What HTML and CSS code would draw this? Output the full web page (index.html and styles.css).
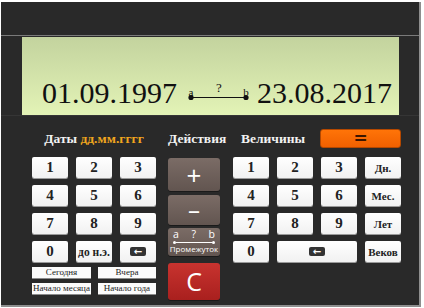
FILE: index.html
```html
<!DOCTYPE html>
<html lang="ru">
<head>
<meta charset="utf-8">
<title>Калькулятор дат</title>
<link rel="stylesheet" href="styles.css">
</head>
<body>
<div class="panel">
  <div class="topbar"></div>
  <div class="display">
    <div class="lcd">
      <span class="date">01.09.1997</span>
      <svg class="link" width="76" height="30" viewBox="0 0 76 30">
        <text x="11" y="18" text-anchor="middle" class="ltr">a</text>
        <text x="39" y="14" text-anchor="middle" class="ltr q">?</text>
        <text x="66" y="18" text-anchor="middle" class="ltr">b</text>
        <line x1="11" y1="19.5" x2="66" y2="19.5" stroke="#111" stroke-width="1.2"/>
        <circle cx="11" cy="19.5" r="2.6" fill="#111"/>
        <circle cx="66" cy="19.5" r="2.6" fill="#111"/>
      </svg>
      <span class="date d2">23.08.2017</span>
    </div>
  </div>
  <div class="controls">
    <div class="col-left">
      <div class="head">Даты <span class="fmt">дд.мм.гггг</span></div>
      <div class="keys3">
        <div class="key">1</div><div class="key">2</div><div class="key">3</div>
        <div class="key">4</div><div class="key">5</div><div class="key">6</div>
        <div class="key">7</div><div class="key">8</div><div class="key">9</div>
        <div class="key">0</div><div class="key small">до н.э.</div><div class="key"><span class="bs">&#8592;</span></div>
      </div>
      <div class="quick">
        <div class="qkey">Сегодня</div><div class="qkey">Вчера</div>
        <div class="qkey">Начало месяца</div><div class="qkey">Начало года</div>
      </div>
    </div>
    <div class="col-mid">
      <div class="head">Действия</div>
      <div class="ops">
        <div class="op plus">+</div>
        <div class="op minus">&#8211;</div>
        <div class="op span">
          <div class="abq"><span>a</span><span>?</span><span>b</span></div>
          <div class="seg"><i></i><b></b><i></i></div>
          <div class="plabel">Промежуток</div>
        </div>
        <div class="op clear">C</div>
      </div>
    </div>
    <div class="col-right">
      <div class="headrow">
        <div class="head hv">Величины</div>
        <div class="eq">=</div>
      </div>
      <div class="keys4">
        <div class="key">1</div><div class="key">2</div><div class="key">3</div><div class="key unit">Дн.</div>
        <div class="key">4</div><div class="key">5</div><div class="key">6</div><div class="key unit">Мес.</div>
        <div class="key">7</div><div class="key">8</div><div class="key">9</div><div class="key unit">Лет</div>
        <div class="key">0</div><div class="key wide"><span class="bs">&#8592;</span></div><div class="key unit">Веков</div>
      </div>
    </div>
  </div>
</div>
</body>
</html>
```

FILE: styles.css
```css
html, body {
  margin: 0;
  padding: 0;
  background: #ffffff;
}

.panel {
  margin: 2px 0 0 1px;
  width: 418px;
  height: 303px;
  background: #292929;
  border-right: 2px solid #8e8e8e;
  border-bottom: 2px solid #8e8e8e;
  display: flex;
  flex-direction: column;
  font-family: "Liberation Serif", "Times New Roman", "DejaVu Serif", serif;
}

.topbar {
  height: 33px;
  border-bottom: 1px solid #7a7a7a;
}

.display {
  height: 80px;
  padding: 1px 20px 0 21px;
  box-sizing: border-box;
  border-bottom: 1px solid #353535;
}

.lcd {
  height: 78px;
  background: linear-gradient(#c3d39e, #e3f3b6);
  display: flex;
  align-items: flex-end;
  padding: 0 0 7px 20px;
  box-sizing: border-box;
}

.date {
  font-family: "Liberation Serif", "Times New Roman", "DejaVu Serif", serif;
  font-size: 30px;
  line-height: 30px;
  color: #111;
}

.link {
  display: block;
  margin-left: 3px;
}

.ltr {
  font-family: "Liberation Serif", serif;
  font-size: 11px;
  fill: #111;
}

.q {
  font-size: 13px;
}

.d2 {
  margin-left: 1px;
}

.controls {
  display: flex;
  padding: 13px 0 0 31px;
}

.head {
  height: 19px;
  line-height: 19px;
  color: #f2f2f2;
  font-weight: bold;
  font-size: 13.5px;
  text-align: center;
  white-space: nowrap;
}

.fmt {
  color: #f0a51e;
}

.col-left {
  width: 124px;
}

.keys3 {
  margin-top: 9px;
  display: grid;
  grid-template-columns: repeat(3, 36px);
  grid-auto-rows: 21px;
  column-gap: 8px;
  row-gap: 7px;
}

.keys4 {
  margin-top: 9px;
  display: grid;
  grid-template-columns: repeat(4, 36px);
  grid-auto-rows: 21px;
  column-gap: 8px;
  row-gap: 7px;
}

.key {
  background: linear-gradient(#ffffff, #f1f1f1);
  border-radius: 2px;
  box-shadow: 0 1px 0 #9a9a9a;
  color: #222;
  font-weight: bold;
  font-size: 15px;
  display: flex;
  align-items: center;
  justify-content: center;
  white-space: nowrap;
}

.key.small {
  font-size: 11.5px;
}

.key.unit {
  font-size: 11px;
}

.key.wide {
  grid-column: span 2;
}

.bs {
  display: inline-block;
  width: 16px;
  height: 9px;
  line-height: 9px;
  background: #333;
  color: #fff;
  border-radius: 2px;
  font-family: "DejaVu Sans", sans-serif;
  font-size: 10px;
  font-weight: bold;
  text-align: center;
}

.quick {
  margin-top: 5px;
  display: grid;
  grid-template-columns: 59px 58px;
  grid-auto-rows: 11px;
  column-gap: 7px;
  row-gap: 5px;
}

.qkey {
  background: #fbfbfb;
  color: #222;
  font-size: 9px;
  line-height: 11px;
  text-align: center;
  white-space: nowrap;
  box-shadow: 0 1px 0 #8a8a8a;
}

.col-mid {
  width: 52px;
  margin-left: 12px;
}

.ops {
  margin-top: 10px;
  display: flex;
  flex-direction: column;
}

.op {
  border-radius: 3px;
  background: linear-gradient(#7b6c66, #625550);
  color: #fff;
  font-family: "Open Sans", "DejaVu Sans", sans-serif;
  display: flex;
  align-items: center;
  justify-content: center;
  box-shadow: 0 1px 0 #1a1a1a;
}

.plus {
  height: 33px;
  font-size: 26px;
  line-height: 1;
}

.minus {
  height: 30px;
  margin-top: 4px;
  font-size: 24px;
  line-height: 1;
}

.span {
  height: 28px;
  margin-top: 3px;
  flex-direction: column;
  justify-content: flex-start;
}

.abq {
  width: 42px;
  height: 11px;
  display: flex;
  justify-content: space-between;
  font-size: 10.5px;
  line-height: 11px;
  margin-top: 1px;
}

.seg {
  width: 42px;
  height: 4px;
  display: flex;
  align-items: center;
}

.seg i {
  width: 3px;
  height: 3px;
  border-radius: 50%;
  background: #fff;
}

.seg b {
  flex: 1;
  height: 1px;
  background: #fff;
}

.plabel {
  font-size: 8px;
  line-height: 10px;
  white-space: nowrap;
}

.clear {
  height: 37px;
  margin-top: 7px;
  background: linear-gradient(#c8332f, #a9201e);
  font-size: 25px;
  line-height: 1;
}

.col-right {
  width: 168px;
  margin-left: 13px;
}

.headrow {
  display: flex;
  align-items: center;
}

.hv {
  width: 80px;
}

.eq {
  margin-left: 7px;
  width: 81px;
  height: 19px;
  box-sizing: border-box;
  background: linear-gradient(#ff7408, #f06000);
  border: 1px solid #b44800;
  border-radius: 3px;
  color: #3a1500;
  font-family: "DejaVu Sans", sans-serif;
  font-weight: bold;
  font-size: 17px;
  line-height: 17px;
  text-align: center;
}
```
